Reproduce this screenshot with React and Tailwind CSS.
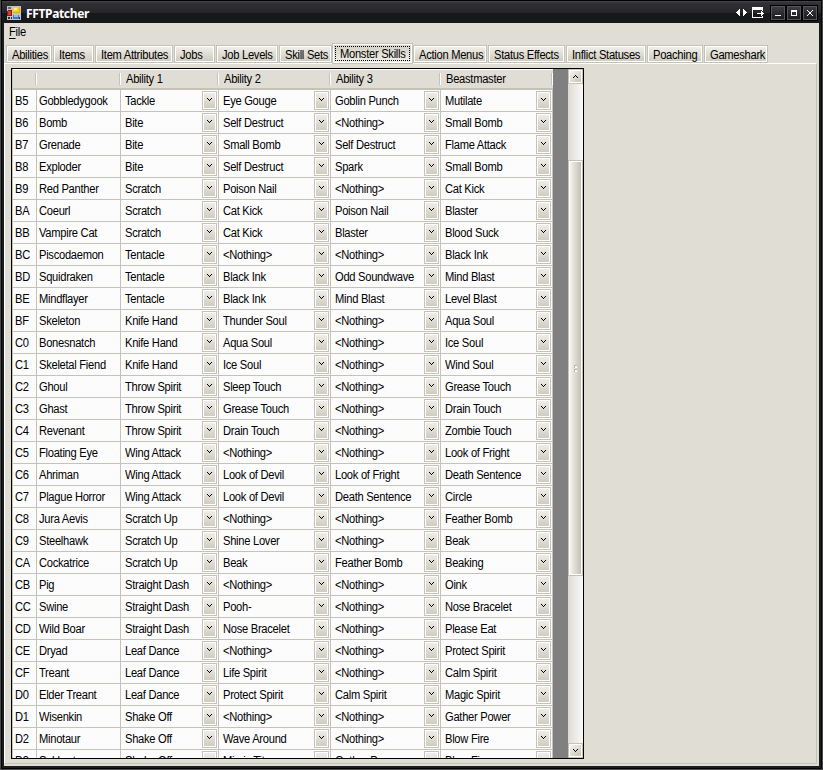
const rows = `B5|Gobbledygook|Tackle|Eye Gouge|Goblin Punch|Mutilate
B6|Bomb|Bite|Self Destruct|<Nothing>|Small Bomb
B7|Grenade|Bite|Small Bomb|Self Destruct|Flame Attack
B8|Exploder|Bite|Self Destruct|Spark|Small Bomb
B9|Red Panther|Scratch|Poison Nail|<Nothing>|Cat Kick
BA|Coeurl|Scratch|Cat Kick|Poison Nail|Blaster
BB|Vampire Cat|Scratch|Cat Kick|Blaster|Blood Suck
BC|Piscodaemon|Tentacle|<Nothing>|<Nothing>|Black Ink
BD|Squidraken|Tentacle|Black Ink|Odd Soundwave|Mind Blast
BE|Mindflayer|Tentacle|Black Ink|Mind Blast|Level Blast
BF|Skeleton|Knife Hand|Thunder Soul|<Nothing>|Aqua Soul
C0|Bonesnatch|Knife Hand|Aqua Soul|<Nothing>|Ice Soul
C1|Skeletal Fiend|Knife Hand|Ice Soul|<Nothing>|Wind Soul
C2|Ghoul|Throw Spirit|Sleep Touch|<Nothing>|Grease Touch
C3|Ghast|Throw Spirit|Grease Touch|<Nothing>|Drain Touch
C4|Revenant|Throw Spirit|Drain Touch|<Nothing>|Zombie Touch
C5|Floating Eye|Wing Attack|<Nothing>|<Nothing>|Look of Fright
C6|Ahriman|Wing Attack|Look of Devil|Look of Fright|Death Sentence
C7|Plague Horror|Wing Attack|Look of Devil|Death Sentence|Circle
C8|Jura Aevis|Scratch Up|<Nothing>|<Nothing>|Feather Bomb
C9|Steelhawk|Scratch Up|Shine Lover|<Nothing>|Beak
CA|Cockatrice|Scratch Up|Beak|Feather Bomb|Beaking
CB|Pig|Straight Dash|<Nothing>|<Nothing>|Oink
CC|Swine|Straight Dash|Pooh-|<Nothing>|Nose Bracelet
CD|Wild Boar|Straight Dash|Nose Bracelet|<Nothing>|Please Eat
CE|Dryad|Leaf Dance|<Nothing>|<Nothing>|Protect Spirit
CF|Treant|Leaf Dance|Life Spirit|<Nothing>|Calm Spirit
D0|Elder Treant|Leaf Dance|Protect Spirit|Calm Spirit|Magic Spirit
D1|Wisenkin|Shake Off|<Nothing>|<Nothing>|Gather Power
D2|Minotaur|Shake Off|Wave Around|<Nothing>|Blow Fire
D3|Sekhret|Shake Off|Mimic Titan|Gather Power|Blow Fire`
  .split('\n')
  .map((line) => line.split('|'));

const columns = [
  { title: '', width: 'w-[24px]' },
  { title: '', width: 'w-[84px]' },
  { title: 'Ability 1', width: 'w-[98px]' },
  { title: 'Ability 2', width: 'w-[112px]' },
  { title: 'Ability 3', width: 'w-[110px]' },
  { title: 'Beastmaster', width: 'w-[112px]' },
];

const tabs = [
  { label: 'Abilities', width: 'w-[46px]' },
  { label: 'Items', width: 'w-[41px]' },
  { label: 'Item Attributes', width: 'w-[78px]' },
  { label: 'Jobs', width: 'w-[41px]' },
  { label: 'Job Levels', width: 'w-[62px]' },
  { label: 'Skill Sets', width: 'w-[53px]' },
  { label: 'Monster Skills', width: 'w-[81px]', active: true },
  { label: 'Action Menus', width: 'w-[74px]' },
  { label: 'Status Effects', width: 'w-[77px]' },
  { label: 'Inflict Statuses', width: 'w-[80px]' },
  { label: 'Poaching', width: 'w-[56px]' },
  { label: 'Gameshark', width: 'w-[64px]' },
];

// Slightly condensed interface text.
function Label({ children }) {
  return <span className="inline-block origin-left scale-x-[0.93] whitespace-nowrap">{children}</span>;
}

function Chevron({ up }) {
  return (
    <svg width="5" height="3" viewBox="0 0 5 3" shapeRendering="crispEdges" className={up ? 'rotate-180' : ''}>
      <path d="M0 0h1v1h-1zM4 0h1v1h-1zM1 1h1v1h-1zM3 1h1v1h-1zM2 2h1v1h-1z" fill="#000" />
    </svg>
  );
}

function AppIcon() {
  return (
    <svg width="14" height="14" viewBox="0 0 14 14" shapeRendering="crispEdges">
      <path d="M0 0h14v14H0z" fill="#c4c2be" />
      <path d="M1 1h3v2H1z" fill="#6d6c6a" />
      <path d="M1 4h4v6H0v-5h1z" fill="#8a1c12" />
      <path d="M1 5h3v4H1z" fill="#dd3a24" />
      <path d="M1 11h2v2H1zM4 11h1v2H4z" fill="#2a2a2c" />
      <path d="M6 1h7v6H6z" fill="#e8a90c" />
      <path d="M6 1h6v5H6z" fill="#fccb35" />
      <path d="M7 2h3v2H7z" fill="#fff0a0" />
      <path d="M6 9h6v4H6z" fill="#3a78dc" />
      <path d="M7 9h4v2H7z" fill="#8dbcf8" />
      <path d="M12 11h1v2h-1z" fill="#2a2a2c" />
    </svg>
  );
}

function TitleButton({ children }) {
  return (
    <div className="h-[16px] w-[16px] border border-black bg-black">
      <div className="flex h-[14px] w-[14px] items-center justify-center border border-[#55555a] bg-linear-to-b from-[#3c3c42] to-[#1c1c1f]">
        <svg width="8" height="8" viewBox="0 0 8 8" shapeRendering="crispEdges">{children}</svg>
      </div>
    </div>
  );
}

function TitleBar() {
  return (
    <header className="flex h-[23px] shrink-0 items-start border-t border-black bg-[linear-gradient(to_bottom,#46464b_0px,#303035_2px,#26262a_12px,#17181a_12px,#17181a_22px)] pl-[5px] pr-[3px]">
      <div className="mt-[5px]"><AppIcon /></div>
      <div className="ml-[5px] mt-[5px] font-['Noto_Sans','Open_Sans',sans-serif] text-[12px] font-bold leading-[16px] tracking-[-0.35px] text-white">FFTPatcher</div>
      <div className="ml-auto flex">
        <svg className="mt-[8px]" width="12" height="7" viewBox="0 0 12 7" shapeRendering="crispEdges">
          <path d="M4 0v7h-1v-1h-1v-1h-1v-1h-1v-1h1v-1h1v-1h1v-1zM7 0h1v1h1v1h1v1h1v1h-1v1h-1v1h-1v1h-1z" fill="#fff" />
        </svg>
        <svg className="ml-[4px] mt-[6px]" width="13" height="11" viewBox="0 0 13 11" shapeRendering="crispEdges">
          <path d="M0 0h11v4h-1v-1h-9v7h9v-1h1v2h-11zM5 6h4v-2h1v1h1v1h1v1h-1v1h-1v1h-1v-2h-4z" fill="#fff" />
        </svg>
        <div className="ml-[5px] mt-[4px] flex">
          <TitleButton><path d="M1 6h6v1h-6z" fill="#fff" /></TitleButton>
          <TitleButton><path d="M1 1h6v6h-6zM2 3v3h4v-3z" fill="#fff" fillRule="evenodd" /></TitleButton>
          <TitleButton><path d="M1 1h1v1h-1zM6 1h1v1h-1zM2 2h1v1h-1zM5 2h1v1h-1zM3 3h2v2h-2zM2 5h1v1h-1zM5 5h1v1h-1zM1 6h1v1h-1zM6 6h1v1h-1z" fill="#fff" /></TitleButton>
        </div>
      </div>
    </header>
  );
}

function Tab({ label, width, active }) {
  if (active) {
    return (
      <div className={`${width} z-10 -ml-px -mr-px h-[21px] shrink-0 border border-[#c5c2b8] bg-white p-px`}>
        <div className="h-[17px] bg-linear-to-b from-[#d3d0c5] to-[#f0eee8] p-px">
          <div className="h-[15px] border border-dotted border-black pl-[4px] leading-[14px]"><Label>{label}</Label></div>
        </div>
      </div>
    );
  }
  return (
    <div className={`${width} mb-[1px] h-[18px] shrink-0 border border-[#c5c2b8] bg-white p-px`}>
      <div className="h-[14px] overflow-visible whitespace-nowrap bg-linear-to-b from-[#f0eee9] to-[#cfccbf] pl-[4px] leading-[17px]"><Label>{label}</Label></div>
    </div>
  );
}

function DropButton() {
  return (
    <div className="mr-[1px] h-[19px] w-[15px] shrink-0 border border-[#c5c2b8] bg-white p-px">
      <div className="flex h-[15px] w-[11px] items-start justify-center bg-linear-to-b from-[#efede8] to-[#cfccbf] pt-[5px]"><Chevron /></div>
    </div>
  );
}

function ScrollButton({ up }) {
  return (
    <div className="h-[15px] w-[15px] shrink-0 border border-[#c5c2b8] bg-white p-px">
      <div className="flex h-[11px] w-[11px] items-center justify-center bg-linear-to-br from-[#f4f3ef] to-[#c8c5b6]"><Chevron up={up} /></div>
    </div>
  );
}

function SkillGrid() {
  return (
    <div className="flex h-[691px] w-[573px] overflow-hidden border border-black bg-[#808080]">
      <div className="flex w-[541px] shrink-0 flex-col border-l border-[#c5c2b8]">
        <div className="flex h-[21px] shrink-0 border-b-2 border-t border-b-[#c5c2b8] border-t-white bg-[#e0ddd5]">
          {columns.map((column, i) => (
            <div key={i} className={`${column.width} flex shrink-0 items-center`}>
              <div className="grow pl-[5px] leading-[18px]"><Label>{column.title}</Label></div>
              <div className="h-[12px] w-[2px] border-l border-[#c5c2b8] bg-white" />
            </div>
          ))}
        </div>
        {rows.map((row) => (
          <div key={row[0]} className="flex h-[22px] shrink-0">
            {row.map((value, i) => (
              <div key={i} className={`${columns[i].width} flex shrink-0 border-b border-r border-[#c5c2b8] bg-[#fcfcfc]`}>
                <div className={`grow whitespace-nowrap leading-[22px] ${i < 2 ? 'pl-[2px]' : 'pl-[4px]'}`}><Label>{value}</Label></div>
                {i > 1 && <div className="pt-px"><DropButton /></div>}
              </div>
            ))}
          </div>
        ))}
      </div>
      <div className="w-[15px] shrink-0" />
      <div className="flex w-[15px] shrink-0 flex-col bg-linear-to-r from-[#dedbd3] to-[#fafafa]">
        <ScrollButton up />
        <div className="h-[76px] shrink-0" />
        <div className="h-[416px] shrink-0 border border-[#c5c2b8] bg-white p-px">
          <div className="flex h-full flex-col items-center justify-center gap-px bg-linear-to-r from-[#f4f3ef] to-[#c4c1b2]">
            <div className="h-[3px] w-[3px] border-l border-t border-[#b8b5a8] bg-white" />
            <div className="h-[3px] w-[3px] border-l border-t border-[#b8b5a8] bg-white" />
          </div>
        </div>
        <div className="grow" />
        <ScrollButton />
      </div>
    </div>
  );
}

export default function App() {
  return (
    <div className="h-[770px] w-[823px] overflow-hidden border-x border-b border-[#4a4a4d] font-['Liberation_Sans',Arial,sans-serif] text-[12px] tracking-[-0.3px] text-black">
      <div className="flex h-[769px] flex-col border-x border-b border-[#050506] bg-[#1b1c1e]">
        <TitleBar />
        <div className="mx-[2px] flex h-[743px] shrink-0 flex-col bg-[#e0ddd5]">
          <div className="h-[20px] pl-[5px] leading-[19px]"><Label><span className="underline underline-offset-2">F</span>ile</Label></div>
          <div className="flex h-[21px] shrink-0 items-end gap-px pl-[2px]">
            {tabs.map((tab) => <Tab key={tab.label} {...tab} />)}
          </div>
          <div className="-mt-px mr-[2px] h-[701px] border border-b-[#c5c2b8] border-l-white border-r-[#c5c2b8] border-t-white pl-[6px] pt-[4px]">
            <SkillGrid />
          </div>
        </div>
      </div>
    </div>
  );
}
